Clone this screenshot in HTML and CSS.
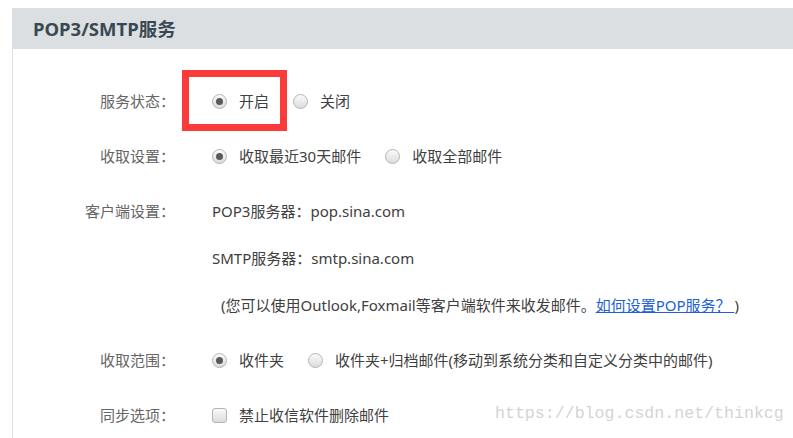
FILE: index.html
```html
<!DOCTYPE html>
<html lang="zh-CN">
<head>
  <meta charset="UTF-8">
  <meta name="viewport" content="width=device-width, initial-scale=1">
  <title>POP3/SMTP服务</title>
  <link rel="stylesheet" href="styles.css">
</head>
<body>

  <div class="page">
    <div class="panel-head">POP3/SMTP服务</div>

    <div class="panel-body">

      <div class="row">
        <div class="label">服务状态：</div>
        <div class="value">
          <span class="mark-box"></span>
          <label class="opt"><span class="radio checked"></span>开启</label>
          <label class="opt"><span class="radio"></span>关闭</label>
        </div>
      </div>

      <div class="row">
        <div class="label">收取设置：</div>
        <div class="value">
          <label class="opt"><span class="radio checked"></span>收取最近30天邮件</label>
          <label class="opt"><span class="radio"></span>收取全部邮件</label>
        </div>
      </div>

      <div class="row">
        <div class="label">客户端设置：</div>
        <div class="value lines">
          <div class="line">POP3服务器：pop.sina.com</div>
          <div class="line">SMTP服务器：smtp.sina.com</div>
          <div class="line note">(您可以使用Outlook,Foxmail等客户端软件来收发邮件。<a href="#">如何设置POP服务？&nbsp;</a>)</div>
        </div>
      </div>

      <div class="row">
        <div class="label">收取范围：</div>
        <div class="value">
          <label class="opt"><span class="radio checked"></span>收件夹</label>
          <label class="opt"><span class="radio"></span>收件夹+归档邮件(移动到系统分类和自定义分类中的邮件)</label>
        </div>
      </div>

      <div class="row">
        <div class="label">同步选项：</div>
        <div class="value">
          <label class="opt"><span class="check"></span>禁止收信软件删除邮件</label>
        </div>
      </div>

    </div>

    <div class="watermark">https://blog.csdn.net/thinkcg</div>
  </div>

</body>
</html>
```

FILE: styles.css
```css
body {
  background: white;
  margin: 0;
  font-family: "Noto Sans", "Noto Sans CJK SC", sans-serif;
  font-size: 15px;
  color: #404040;
}

.page {
  position: relative;
  padding: 8px 0 0 12px;
  height: 430px;
  overflow: hidden;
}

.panel-head {
  height: 41px;
  line-height: 41px;
  padding-left: 21px;
  background: #dcdfe2;
  color: #3a4852;
  font-size: 18.5px;
  font-weight: bold;
}

.panel-body {
  border-left: 1px solid #e0e0e0;
  padding-top: 42px;
  height: 360px;
}

.row {
  display: grid;
  grid-template-columns: 162px 1fr;
  column-gap: 37px;
  margin-bottom: 35px;
}

.label {
  text-align: right;
  color: #666;
  line-height: 20px;
}

.value {
  position: relative;
  display: flex;
  align-items: center;
  height: 20px;
}

.value.lines {
  display: block;
  height: auto;
}

.line {
  line-height: 20px;
  margin-bottom: 27px;
}

.line:last-child {
  margin-bottom: 0;
}

.note {
  padding-left: 9px;
}

.note a {
  color: #1d5fd6;
  text-decoration: underline;
}

.opt {
  display: flex;
  align-items: center;
  margin-right: 24px;
  line-height: 20px;
  cursor: pointer;
}

.radio,
.check {
  width: 13px;
  height: 13px;
  margin-right: 12px;
  border: 1px solid #b4b4b4;
  background: linear-gradient(#fafafa, #dcdcdc);
  position: relative;
}

.radio {
  border-radius: 50%;
}

.check {
  border-radius: 3px;
}

.radio.checked::after {
  content: "";
  position: absolute;
  left: 3px;
  top: 3px;
  width: 7px;
  height: 7px;
  border-radius: 50%;
  background: #5a5a5a;
}

.mark-box {
  position: absolute;
  left: -30px;
  top: -21px;
  width: 105px;
  height: 61px;
  box-sizing: border-box;
  border: 7px solid #fb3a3a;
}

.watermark {
  position: absolute;
  left: 495px;
  top: 404px;
  font-family: "Liberation Mono", monospace;
  font-size: 16.6px;
  color: #d4d4d4;
}
```
